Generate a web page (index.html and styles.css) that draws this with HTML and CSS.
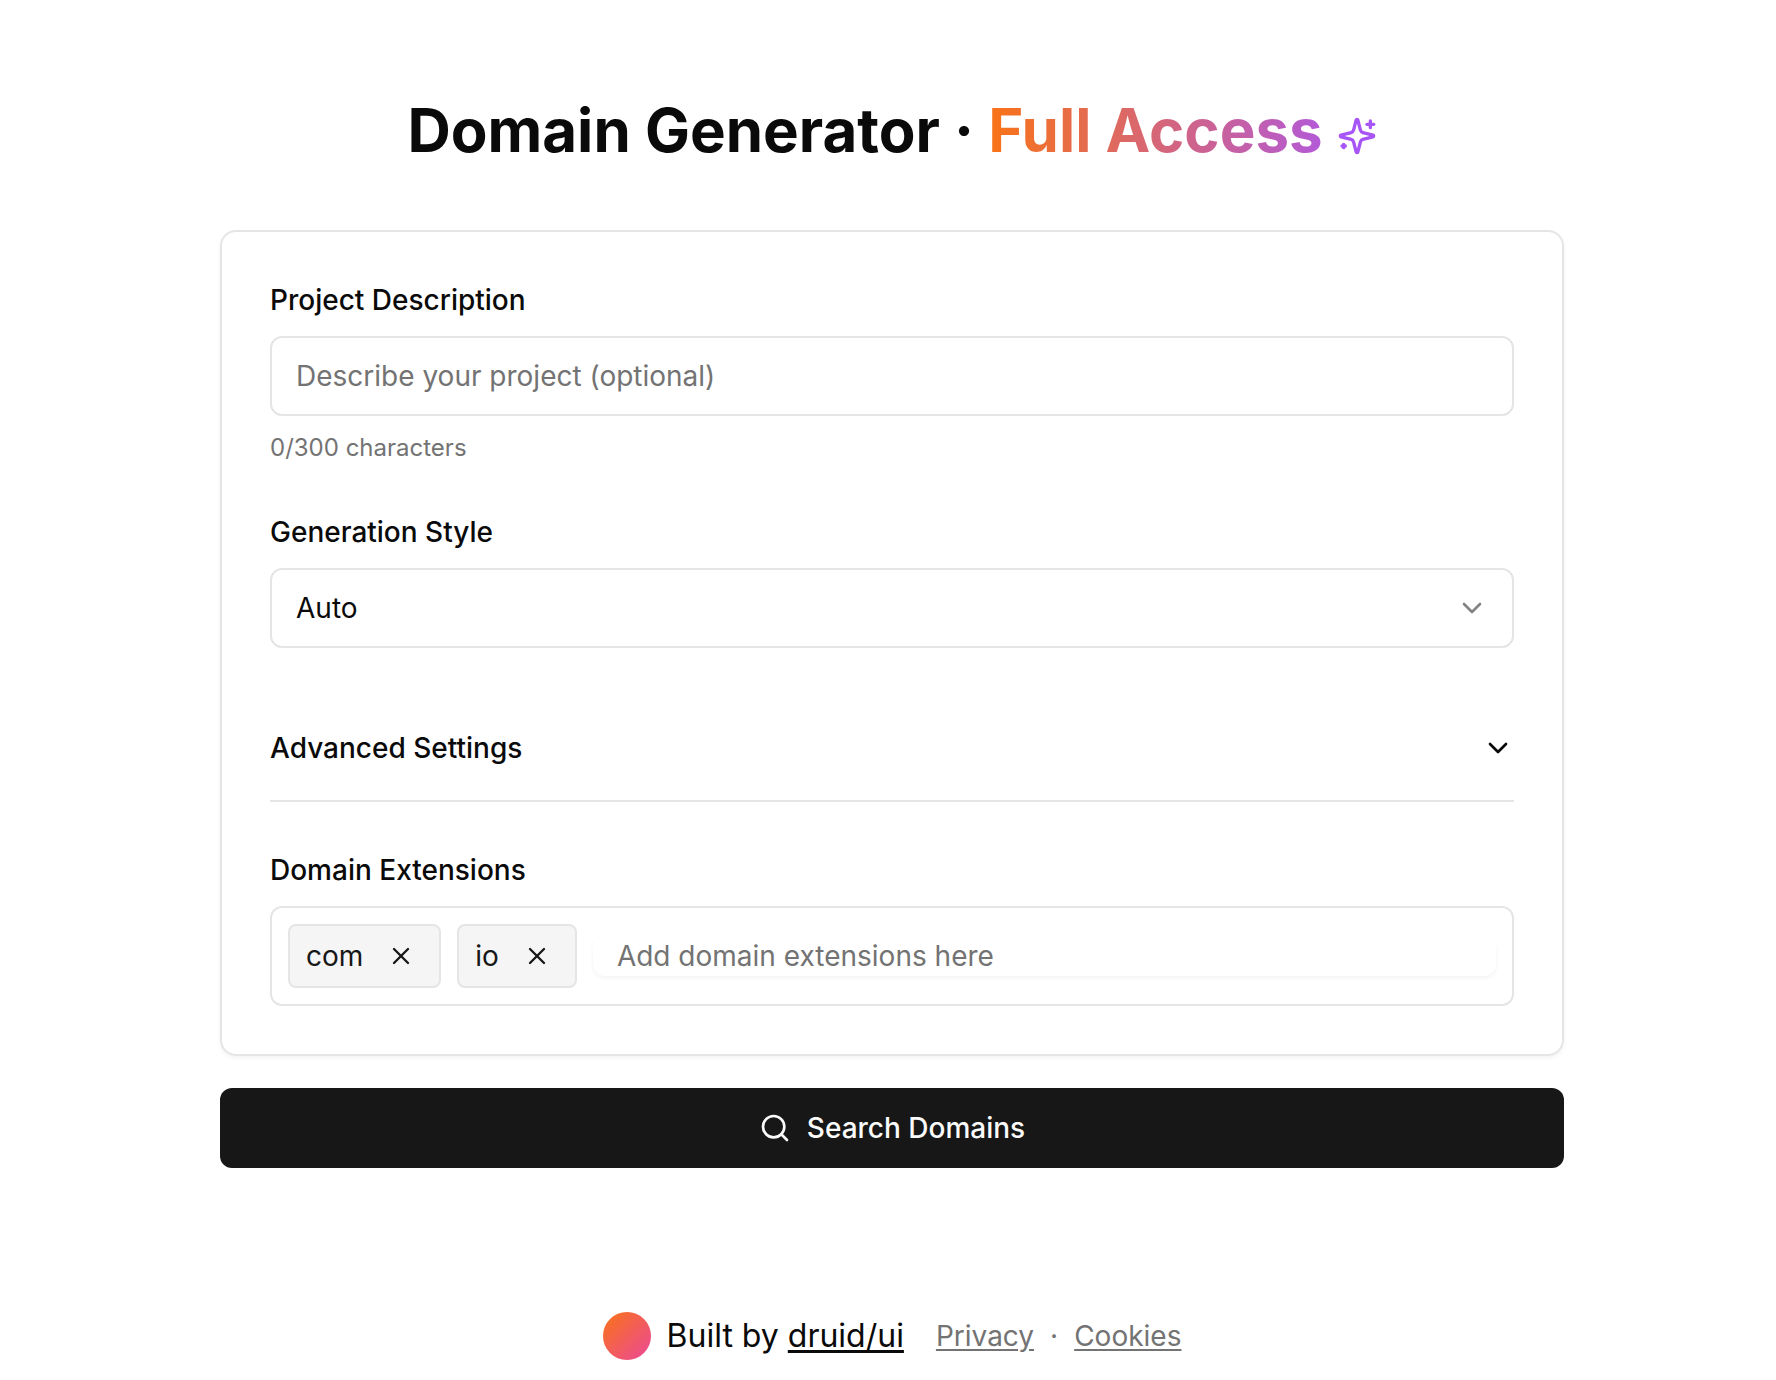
FILE: index.html
```html
<!DOCTYPE html>
<html lang="en">
<head>
    <meta charset="UTF-8">
    <meta name="viewport" content="width=device-width, initial-scale=1.0">
    <title>Domain Generator</title>
    <link rel="stylesheet" href="styles.css">
</head>
<body>
    <main class="container">
        <h1 class="page-title">
            Domain Generator ·
            <span class="gradient-text">Full Access<svg class="icon sparkles" viewBox="0 0 24 24">
                <path d="M9.937 15.5A2 2 0 0 0 8.5 14.063l-6.135-1.582a.5.5 0 0 1 0-.962L8.5 9.936A2 2 0 0 0 9.937 8.5l1.582-6.135a.5.5 0 0 1 .963 0L14.063 8.5A2 2 0 0 0 15.5 9.937l6.135 1.581a.5.5 0 0 1 0 .964L15.5 14.063a2 2 0 0 0-1.437 1.437l-1.582 6.135a.5.5 0 0 1-.963 0z"/>
                <path d="M20 3v4"/>
                <path d="M22 5h-4"/>
                <path d="M4 17v2"/>
                <path d="M5 18H3"/>
            </svg></span>
        </h1>

        <form class="generator-form">
            <div class="card">
                <!-- Description -->
                <div class="field">
                    <label class="label" for="description">Project Description</label>
                    <input class="input" id="description" type="text" maxlength="300" placeholder="Describe your project (optional)">
                    <p class="hint">0/300 characters</p>
                </div>

                <!-- Style -->
                <div class="field">
                    <label class="label" for="style">Generation Style</label>
                    <div class="select-wrapper">
                        <select class="input select" id="style">
                            <option>Auto</option>
                        </select>
                        <svg class="icon select-icon" viewBox="0 0 24 24"><path d="m6 9 6 6 6-6"/></svg>
                    </div>
                </div>

                <!-- Accordion -->
                <button class="accordion-trigger" type="button" aria-expanded="false">
                    Advanced Settings
                    <svg class="icon" viewBox="0 0 24 24"><path d="m6 9 6 6 6-6"/></svg>
                </button>

                <!-- Extensions -->
                <div class="field">
                    <label class="label" for="extensions">Domain Extensions</label>
                    <div class="tag-box">
                        <span class="tag">com
                            <button class="tag-remove" type="button" aria-label="Remove com">
                                <svg class="icon" viewBox="0 0 24 24"><path d="M18 6 6 18"/><path d="m6 6 12 12"/></svg>
                            </button>
                        </span>
                        <span class="tag">io
                            <button class="tag-remove" type="button" aria-label="Remove io">
                                <svg class="icon" viewBox="0 0 24 24"><path d="M18 6 6 18"/><path d="m6 6 12 12"/></svg>
                            </button>
                        </span>
                        <input class="tag-input" id="extensions" type="text" placeholder="Add domain extensions here">
                    </div>
                </div>
            </div>

            <button class="submit-button" type="submit">
                <svg class="icon" viewBox="0 0 24 24"><circle cx="11" cy="11" r="8"/><path d="m21 21-4.3-4.3"/></svg>
                Search Domains
            </button>
        </form>
    </main>

    <footer class="footer">
        <div class="built-by">
            <span class="avatar"></span>
            <span>Built by <a href="#">druid/ui</a></span>
        </div>
        <nav class="footer-links">
            <a href="#">Privacy</a>
            <span>·</span>
            <a href="#">Cookies</a>
        </nav>
    </footer>
</body>
</html>
```

FILE: styles.css
```css
:root {
    --foreground: #0a0a0a;
    --muted: #737373;
    --border: #e5e5e5;
    --primary: #171717;
    --secondary: #f5f5f5;
    --radius: 12px;
    --spacing: 16px;
}

* {
    margin: 0;
    padding: 0;
    box-sizing: border-box;
}

body {
    background: #fff;
    color: var(--foreground);
    font-family: Inter, "Liberation Sans", sans-serif;
    font-size: 28px;
    line-height: 40px;
    padding-left: 8px;
}

input,
select,
button {
    font: inherit;
    color: inherit;
}

button {
    background: none;
    border: none;
    cursor: pointer;
}

a {
    color: inherit;
    text-underline-offset: 3px;
}

.container {
    max-width: 1344px;
    margin: 0 auto;
    padding-top: 94px;
}

.icon {
    width: 32px;
    height: 32px;
    flex-shrink: 0;
    fill: none;
    stroke: currentColor;
    stroke-width: 2;
    stroke-linecap: round;
    stroke-linejoin: round;
}

.page-title {
    margin-bottom: 64px;
    font-size: 60px;
    line-height: 72px;
    font-weight: 700;
    text-align: center;
}

.gradient-text {
    background: linear-gradient(to right, #f97316, #a855f7);
    -webkit-background-clip: text;
    background-clip: text;
    color: transparent;
}

.sparkles {
    width: 40px;
    height: 40px;
    margin-left: 14px;
    vertical-align: -4px;
    color: #a855f7;
}

.generator-form {
    display: flex;
    flex-direction: column;
    gap: 32px;
}

.card {
    display: flex;
    flex-direction: column;
    gap: 48px;
    padding: 48px;
    border: 2px solid var(--border);
    border-radius: 16px;
    box-shadow: 0 2px 4px rgba(0, 0, 0, 0.05);
}

.field {
    display: flex;
    flex-direction: column;
    gap: var(--spacing);
}

.label {
    font-weight: 500;
}

.input {
    width: 100%;
    height: 80px;
    padding: 0 24px;
    background: transparent;
    border: 2px solid var(--border);
    border-radius: var(--radius);
}

::placeholder {
    color: var(--muted);
    opacity: 1;
}

.hint {
    font-size: 24px;
    line-height: 32px;
    color: var(--muted);
}

.select-wrapper {
    position: relative;
    display: flex;
}

.select {
    appearance: none;
}

.select-icon {
    position: absolute;
    top: 24px;
    right: 26px;
    opacity: 0.5;
    pointer-events: none;
}

.accordion-trigger {
    display: flex;
    justify-content: space-between;
    align-items: center;
    padding: 32px 0;
    border-bottom: 2px solid var(--border);
    font-weight: 500;
}

.tag-box {
    display: flex;
    align-items: center;
    gap: var(--spacing);
    padding: var(--spacing);
    border: 2px solid var(--border);
    border-radius: var(--radius);
}

.tag {
    display: flex;
    align-items: center;
    height: 64px;
    padding-left: var(--spacing);
    background: var(--secondary);
    border: 2px solid var(--border);
    border-radius: 8px;
    color: var(--primary);
}

.tag-remove {
    display: flex;
    padding: 0 24px;
}

.tag-remove .icon {
    width: 28px;
    height: 28px;
}

.tag-input {
    flex: 1;
    min-width: 0;
    height: 40px;
    padding: 0 24px;
    background: transparent;
    border: none;
    border-radius: var(--radius);
    box-shadow: 0 2px 4px rgba(0, 0, 0, 0.05);
}

.submit-button {
    display: flex;
    justify-content: center;
    align-items: center;
    gap: var(--spacing);
    height: 80px;
    background: var(--primary);
    border-radius: var(--radius);
    color: #fafafa;
    font-weight: 500;
}

.footer {
    display: flex;
    justify-content: center;
    align-items: center;
    gap: 32px;
    padding-top: 144px;
}

.built-by {
    display: flex;
    align-items: center;
    gap: var(--spacing);
    font-size: 32px;
    line-height: 48px;
}

.avatar {
    width: 48px;
    height: 48px;
    border-radius: 50%;
    background: linear-gradient(to bottom right, #f97316, #ec4899);
}

.footer-links {
    display: flex;
    gap: var(--spacing);
    color: var(--muted);
}
```
